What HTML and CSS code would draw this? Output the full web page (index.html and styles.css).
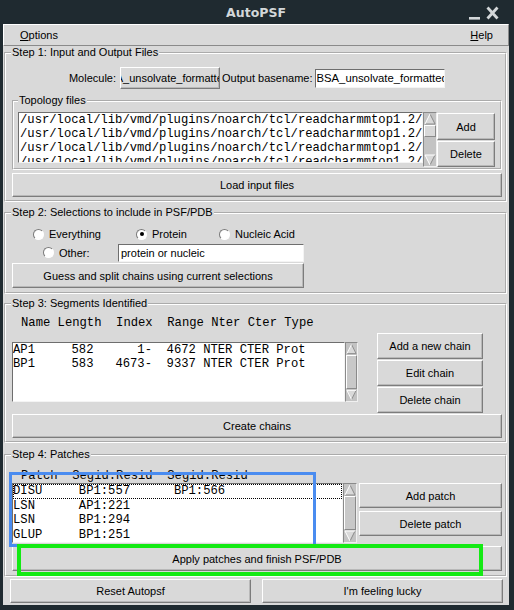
FILE: index.html
```html
<!DOCTYPE html>
<html>
<head>
<meta charset="utf-8">
<title>AutoPSF</title>
<link rel="stylesheet" href="styles.css">
</head>
<body>
<div class="win">
  <div class="titlebar">
    <span class="title">AutoPSF</span>
    <span class="wctl">
      <svg class="wmin" width="11" height="20" viewBox="0 0 11 20"><rect x="0" y="15" width="11" height="2.6" fill="#d3d7d9"/></svg>
      <svg class="wclose" width="13" height="20" viewBox="0 0 13 20"><path d="M1.5 5.5 L11.5 16.5 M11.5 5.5 L1.5 16.5" stroke="#d3d7d9" stroke-width="2.8"/></svg>
    </span>
  </div>
  <div class="client">
    <div class="menubar">
      <span class="menu"><u>O</u>ptions</span>
      <span class="menu"><u>H</u>elp</span>
    </div>

    <fieldset class="lf step1">
      <legend>Step 1: Input and Output Files</legend>
      <div class="molrow">
        <span class="mollabel">Molecule:</span>
        <span class="menubtn"><span>BSA_unsolvate_formatted</span></span>
        <span class="outlabel">Output basename:</span>
        <span class="entry outentry"><span class="clip">BSA_unsolvate_formatted</span></span>
      </div>
      <fieldset class="lf topo">
        <legend>Topology files</legend>
        <div class="toporow">
          <div class="listbox topolist">
            <div class="li">/usr/local/lib/vmd/plugins/noarch/tcl/readcharmmtop1.2/</div>
            <div class="li">/usr/local/lib/vmd/plugins/noarch/tcl/readcharmmtop1.2/</div>
            <div class="li">/usr/local/lib/vmd/plugins/noarch/tcl/readcharmmtop1.2/</div>
            <div class="li">/usr/local/lib/vmd/plugins/noarch/tcl/readcharmmtop1.2/</div>
          </div>
          <div class="sb">
            <svg class="arr" viewBox="0 0 12 12"><polygon class="af" points="6,1 11,11 1,11"/><polyline class="ad" points="6,1 11,11 1,11"/><polyline class="al" points="1,11 6,1"/></svg>
            <div class="slider slider-topo"></div>
            <div class="trough"></div>
            <svg class="arr" viewBox="0 0 12 12"><polygon class="af" points="1,1 11,1 6,11"/><polyline class="ad" points="11,1 6,11"/><polyline class="al" points="6,11 1,1 11,1"/></svg>
          </div>
          <div class="btncol topobtns">
            <button class="btn b-add">Add</button>
            <button class="btn b-del">Delete</button>
          </div>
        </div>
      </fieldset>
      <button class="btn wide load">Load input files</button>
    </fieldset>

    <fieldset class="lf step2">
      <legend>Step 2: Selections to include in PSF/PDB</legend>
      <div class="radiorow">
        <span class="ritem r1"><span class="radio"></span>Everything</span>
        <span class="ritem r2"><span class="radio on"></span>Protein</span>
        <span class="ritem r3"><span class="radio"></span>Nucleic Acid</span>
      </div>
      <div class="otherrow">
        <span class="ritem r4"><span class="radio"></span>Other:</span>
        <span class="entry otherentry">protein or nucleic</span>
      </div>
      <button class="btn guess">Guess and split chains using current selections</button>
    </fieldset>

    <fieldset class="lf step3">
      <legend>Step 3: Segments Identified</legend>
      <div class="s3row">
        <div class="leftcol">
          <div class="mono hdr">Name Length  Index  Range Nter Cter Type</div>
          <div class="listrow s3list">
            <div class="listbox chainlist">
              <div class="li">AP1     582      1-  4672 NTER CTER Prot</div>
              <div class="li">BP1     583   4673-  9337 NTER CTER Prot</div>
            </div>
            <div class="sb sb13">
              <svg class="arr" viewBox="0 0 12 12"><polygon class="af" points="6,1 11,11 1,11"/><polyline class="ad" points="6,1 11,11 1,11"/><polyline class="al" points="1,11 6,1"/></svg>
              <div class="slider slider-full"></div>
              <svg class="arr" viewBox="0 0 12 12"><polygon class="af" points="1,1 11,1 6,11"/><polyline class="ad" points="11,1 6,11"/><polyline class="al" points="6,11 1,1 11,1"/></svg>
            </div>
          </div>
        </div>
        <div class="btncol chainbtns">
          <button class="btn cbtn">Add a new chain</button>
          <button class="btn cbtn">Edit chain</button>
          <button class="btn cbtn">Delete chain</button>
        </div>
      </div>
      <button class="btn wide create">Create chains</button>
    </fieldset>

    <fieldset class="lf step4">
      <legend>Step 4: Patches</legend>
      <div class="s4row">
        <div class="leftcol">
          <div class="mono hdr">Patch  Segid:Resid  Segid:Resid</div>
          <div class="listrow">
            <div class="listbox patchlist">
              <div class="li focus">DISU     BP1:557      BP1:566</div>
              <div class="li">LSN      AP1:221</div>
              <div class="li">LSN      BP1:294</div>
              <div class="li">GLUP     BP1:251</div>
            </div>
            <div class="sb">
              <svg class="arr" viewBox="0 0 12 12"><polygon class="af" points="6,1 11,11 1,11"/><polyline class="ad" points="6,1 11,11 1,11"/><polyline class="al" points="1,11 6,1"/></svg>
              <div class="slider slider-patch"></div>
              <div class="trough"></div>
              <svg class="arr" viewBox="0 0 12 12"><polygon class="af" points="1,1 11,1 6,11"/><polyline class="ad" points="11,1 6,11"/><polyline class="al" points="6,11 1,1 11,1"/></svg>
            </div>
          </div>
        </div>
        <div class="btncol patchbtns">
          <button class="btn pbtn">Add patch</button>
          <button class="btn pbtn pdel">Delete patch</button>
        </div>
      </div>
      <button class="btn wide apply">Apply patches and finish PSF/PDB</button>
    </fieldset>

    <div class="bottomrow">
      <button class="btn bbtn">Reset Autopsf</button>
      <button class="btn bbtn">I'm feeling lucky</button>
    </div>
  </div>

  <div class="mark mark-blue"></div>
  <div class="mark mark-green"></div>
</div>
</body>
</html>
```

FILE: styles.css
```css
* { box-sizing: border-box; }
html, body { margin: 0; padding: 0; background: #1f2a30; }
body {
  font-family: "Liberation Sans", Arial, Helvetica, sans-serif;
  font-size: 11px;
  color: #000;
}
.win {
  position: relative;
  width: 514px;
  height: 610px;
  background: #1f2a30;
  display: flex;
  flex-direction: column;
  padding: 0 5px 5px 3px;
  overflow: hidden;
}
.titlebar {
  height: 24px;
  flex: none;
  display: grid;
  grid-template-columns: 1fr auto 1fr;
  align-items: center;
}
.title {
  grid-column: 2;
  font-family: "DejaVu Sans", sans-serif;
  font-weight: bold;
  font-size: 12.5px;
  color: #d3d7d9;
}
.wctl {
  grid-column: 3;
  justify-self: end;
  display: flex;
  align-items: center;
  gap: 6px;
  padding-right: 10px;
}
.wctl svg { display: block; }

.client {
  flex: 1;
  background: #d9d9d9;
  display: flex;
  flex-direction: column;
}
.menubar {
  height: 22px;
  flex: none;
  display: flex;
  justify-content: space-between;
  align-items: center;
  padding: 0 15px 0 16px;
  border: 1px solid;
  border-color: #ffffff #8a8a8a #8a8a8a #ffffff;
}

/* labelled frames */
.lf {
  margin: 0;
  padding: 0;
  min-width: 0;
  border: 2px groove #ffffff;
}
.lf > legend {
  padding: 0 1px;
  margin-left: 5px;
  line-height: 13px;
  height: 13px;
}
.step1, .step2, .step3, .step4 { margin: 0 2px 0 1px; }
.step1 { padding-bottom: 3px; }
.step2 { margin-top: 4px; padding-bottom: 4px; }
.step3 { margin-top: 3px; padding-bottom: 3px; }
.step4 { margin-top: 5px; padding-bottom: 4px; }

/* buttons */
.btn {
  font: inherit;
  color: #000;
  background: #d9d9d9;
  border: 1px solid;
  border-color: #ffffff #7c7c7c #7c7c7c #ffffff;
  box-shadow: inset -1px -1px 0 #b8b8b8;
  padding: 0;
  margin: 0;
  display: flex;
  align-items: center;
  justify-content: center;
  white-space: nowrap;
  flex: none;
}
.wide { margin: 0 3px 0 6px; width: 490px; height: 24px; }
.load { margin-top: 3px; }
.create { margin-top: 1px; }
.apply { margin-top: 3px; height: 25px; }

/* entries & lists */
.entry, .listbox {
  background: #ffffff;
  border: 1px solid;
  border-color: #6e6e6e #f4f4f4 #f4f4f4 #6e6e6e;
  overflow: hidden;
  white-space: nowrap;
}
.entry { display: flex; align-items: center; padding-left: 2px; }
.clip { display: block; overflow: hidden; white-space: nowrap; width: 100%; }

/* step 1 */
.molrow {
  margin-top: 8px;
  height: 22px;
  display: flex;
  align-items: center;
}
.mollabel { width: 110px; text-align: right; flex: none; }
.menubtn {
  margin-left: 4px;
  width: 100px;
  height: 22px;
  flex: none;
  display: flex;
  justify-content: center;
  align-items: center;
  overflow: hidden;
  padding-right: 10px;
  border: 1px solid;
  border-color: #ffffff #7c7c7c #7c7c7c #ffffff;
  box-shadow: inset -1px -1px 0 #b8b8b8;
}
.menubtn span { flex: none; white-space: nowrap; }
.outlabel { margin-left: 2px; flex: none; }
.outentry {
  margin-left: 2px;
  width: 130px;
  height: 19px;
  flex: none;
  padding-left: 1px;
  font-size: 11.3px;
}

.topo { margin: 5px 3px 0 6px; padding-bottom: 1px; }
.topo > legend { margin-left: 4px; }
.toporow { margin-top: 5px; display: flex; align-items: flex-start; }
.topolist { margin-left: 4px; width: 405px; height: 51px; flex: none; padding-left: 1px; }

.mono, .listbox {
  font-family: "Liberation Mono", "DejaVu Sans Mono", monospace;
  font-size: 12.2px;
}
.li { white-space: pre; line-height: 14px; height: 14px; overflow: hidden; }
.patchlist .li { line-height: 14.5px; height: 14.5px; }
.li.focus { outline: 1px dotted #000; outline-offset: -1px; }

/* scrollbars */
.sb {
  width: 14px;
  flex: none;
  align-self: stretch;
  background: #c3c3c3;
  border: 1px solid;
  border-color: #8a8a8a #f0f0f0 #f0f0f0 #8a8a8a;
  display: flex;
  flex-direction: column;
}
.sb13 { width: 13px; }
.arr { width: 12px; height: 12px; display: block; flex: none; }
.sb13 .arr { width: 11px; }
.af { fill: #d9d9d9; }
.ad { fill: none; stroke: #8a8a8a; stroke-width: 1; }
.al { fill: none; stroke: #ffffff; stroke-width: 1; }
.slider {
  background: #d9d9d9;
  border: 1px solid;
  border-color: #ffffff #8a8a8a #8a8a8a #ffffff;
  flex: none;
}
.slider-topo { height: 12px; }
.slider-full { flex: 1; background: #c8c8c8; }
.slider-patch { height: 34px; background: #c8c8c8; }
.trough { flex: 1; }

.btncol { display: flex; flex-direction: column; flex: none; }
.topobtns { width: 58px; }
.b-add { margin-top: 1px; height: 27px; }
.b-del { margin-top: 1px; height: 26px; }

/* step 2 */
.radiorow {
  margin-top: 7px;
  height: 16px;
  display: flex;
  align-items: center;
  padding-left: 27px;
}
.otherrow {
  margin-top: 1px;
  height: 19px;
  display: flex;
  align-items: center;
  padding-left: 37px;
}
.ritem { display: flex; align-items: center; gap: 5px; flex: none; }
.r1 { width: 103px; }
.r2 { width: 83px; }
.r4 { width: 75px; }
.radio {
  width: 11px;
  height: 11px;
  border-radius: 50%;
  border: 1px solid;
  border-color: #7a7a7a #ffffff #ffffff #7a7a7a;
  background: #ffffff;
  position: relative;
  flex: none;
}
.radio.on::after {
  content: "";
  position: absolute;
  left: 2.5px;
  top: 2.5px;
  width: 4px;
  height: 4px;
  border-radius: 50%;
  background: #000;
}
.otherentry { width: 186px; height: 18px; flex: none; }
.guess { margin: 1px 0 0 6px; width: 292px; height: 25px; }

/* step 3 */
.s3row { display: flex; margin-top: 6px; }
.leftcol { display: flex; flex-direction: column; flex: none; }
.hdr { padding-left: 15px; line-height: 14px; height: 14px; white-space: pre; }
.listrow { display: flex; margin-left: 6px; }
.s3list { margin-top: 12px; }
.chainlist { width: 333px; height: 60px; flex: none; }
.chainbtns { margin-left: 19px; margin-top: 17px; width: 106px; }
.cbtn { height: 26px; }
.cbtn + .cbtn { margin-top: 1px; }

/* step 4 */
.s4row { display: flex; margin-top: 8px; }
.patchlist { width: 331px; height: 60px; flex: none; }
.patchbtns { margin-left: 2px; margin-top: 14px; width: 143px; }
.pbtn { height: 25px; }
.pdel { margin-top: 3px; }

/* bottom */
.bottomrow {
  margin-top: 2px;
  padding-left: 7px;
  display: flex;
  gap: 11px;
}
.bbtn { width: 241px; height: 24px; }

/* annotation overlays */
.mark { position: absolute; pointer-events: none; }
.mark-blue {
  left: 9px;
  top: 472px;
  width: 307px;
  height: 75px;
  border: 3px solid #4a8cf0;
}
.mark-green {
  left: 17px;
  top: 544px;
  width: 466px;
  height: 32px;
  border: 4px solid #14ea14;
}
```
